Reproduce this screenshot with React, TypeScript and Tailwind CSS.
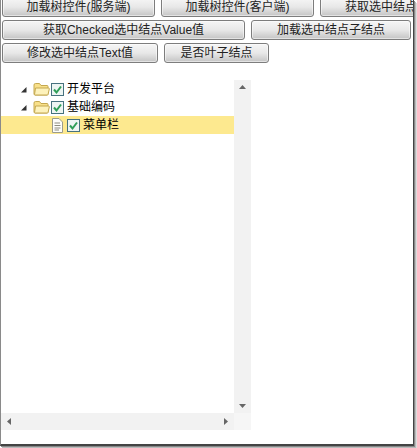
import { ReactNode } from 'react'

const fontStack = '"Liberation Sans", "Noto Sans CJK SC", sans-serif'

function ToolButton({ width, children }: { width: string; children: ReactNode }) {
  return (
    <button
      className={`${width} h-[20px] shrink-0 rounded-[3px] border border-[#7d7d7d] bg-gradient-to-b from-[#f6f6f6] via-[#e8e8e8] to-[#c4c4c4] text-center text-[12px] leading-[16px] text-[#222] shadow-[inset_0_0_0_1px_#ffffff80]`}
    >
      {children}
    </button>
  )
}

function Arrow() {
  return (
    <svg width="7" height="7" viewBox="0 0 7 7" className="shrink-0">
      <path d="M6.5 1 L6.5 6.5 L1 6.5 Z" fill="#333" />
    </svg>
  )
}

function Folder() {
  return (
    <svg width="17" height="14" viewBox="0 0 17 14" className="shrink-0">
      <path d="M1 12 V3 Q1 1.5 2.5 1.5 H6.5 L8 3.5 H14 Q15 3.5 15 4.5 V12 Q15 13 14 13 H2 Q1 13 1 12 Z" fill="#f8e08a" stroke="#c4a850" />
      <path d="M1.5 12.5 L2.5 6 H15.5 Q16.5 6 16.3 7 L15 12.5 Q14.8 13 14 13 H2 Z" fill="#fdf2bc" stroke="#c4a850" />
    </svg>
  )
}

function FileIcon() {
  return (
    <svg width="13" height="15" viewBox="0 0 13 15" className="shrink-0">
      <path d="M1.5 .5 H8 L11.5 4 V14.5 H1.5 Z" fill="#fdfdfa" stroke="#9c9c8c" />
      <path d="M3.5 5 H9 M3.5 7.5 H9.5 M3.5 10 H9.5 M3.5 12 H8" stroke="#8d8d80" fill="none" />
    </svg>
  )
}

function Check() {
  return (
    <svg width="13" height="13" viewBox="0 0 13 13" className="shrink-0">
      <rect x=".5" y=".5" width="12" height="12" fill="#eef5f3" stroke="#47727f" />
      <path d="M3 6.5 L5.5 9.5 L10 3.5" fill="none" stroke="#2f9e58" strokeWidth="2" />
    </svg>
  )
}

function TreeRow({ label, leaf, selected }: { label: string; leaf?: boolean; selected?: boolean }) {
  return (
    <div className={`flex h-[18px] items-center ${leaf ? 'pl-[50px]' : 'pl-[19px]'} ${selected ? 'bg-[#fde98f]' : ''}`}>
      {!leaf && <Arrow />}
      <div className={`flex items-center ${leaf ? 'gap-[3px]' : 'ml-[6px] gap-[1px]'}`}>
        {leaf ? <FileIcon /> : <Folder />}
        <Check />
      </div>
      <span className="ml-[3px] text-[12px] leading-[18px] text-black">{label}</span>
    </div>
  )
}

export default function App() {
  return (
    <div
      className="h-[448px] w-[417px] overflow-hidden bg-white pr-[3px] pb-[2px]"
      style={{ fontFamily: fontStack }}
    >
      <div className="h-[446px] overflow-hidden border-r border-b-2 border-l border-[#8a8a8a] border-r-[#444] border-b-[#444] pl-[1px] shadow-[1px_1px_0_#888,2px_2px_0_#bbb,3px_3px_0_#ddd]">
        <div className="-mt-[3px] flex flex-col gap-[3px]">
          <div className="flex gap-[6px] overflow-hidden">
            <ToolButton width="w-[153px]">加载树控件(服务端)</ToolButton>
            <ToolButton width="w-[153px]">加载树控件(客户端)</ToolButton>
            <ToolButton width="w-[122px]">获取选中结点</ToolButton>
          </div>
          <div className="flex gap-[6px]">
            <ToolButton width="w-[243px]">获取Checked选中结点Value值</ToolButton>
            <ToolButton width="w-[160px]">加载选中结点子结点</ToolButton>
          </div>
          <div className="flex gap-[6px]">
            <ToolButton width="w-[156px]">修改选中结点Text值</ToolButton>
            <ToolButton width="w-[105px]">是否叶子结点</ToolButton>
          </div>
        </div>
        <div className="mt-[17px] -ml-[1px] grid h-[350px] w-[250px] grid-cols-[233px_17px] grid-rows-[333px_17px]">
          <div>
            <TreeRow label="开发平台" />
            <TreeRow label="基础编码" />
            <TreeRow label="菜单栏" leaf selected />
          </div>
          <div className="flex flex-col items-center justify-between bg-[#f2f2f2] py-[5px]">
            <svg width="7" height="4" viewBox="0 0 7 4"><path d="M3.5 0 L7 4 H0 Z" fill="#666" /></svg>
            <svg width="7" height="4" viewBox="0 0 7 4"><path d="M3.5 4 L7 0 H0 Z" fill="#666" /></svg>
          </div>
          <div className="flex items-center justify-between bg-[#f2f2f2] px-[6px]">
            <svg width="4" height="7" viewBox="0 0 4 7"><path d="M0 3.5 L4 0 V7 Z" fill="#666" /></svg>
            <svg width="4" height="7" viewBox="0 0 4 7"><path d="M4 3.5 L0 0 V7 Z" fill="#666" /></svg>
          </div>
          <div className="bg-[#f6f6f6]" />
        </div>
      </div>
    </div>
  )
}
